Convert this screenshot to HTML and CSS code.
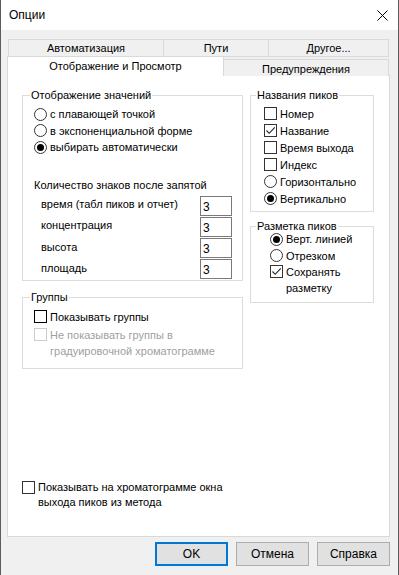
FILE: index.html
```html
<!DOCTYPE html>
<html lang="ru">
<head>
    <meta charset="UTF-8">
    <meta name="viewport" content="width=device-width, initial-scale=1.0">
    <title>Опции</title>
    <link rel="stylesheet" href="styles.css">
</head>
<body>
<div class="window">
    <div class="titlebar">
        <span class="title">Опции</span>
        <svg class="close" width="11" height="11" viewBox="0 0 11 11">
            <path d="M0.5 0.5 L10.5 10.5 M10.5 0.5 L0.5 10.5" stroke="#000" stroke-width="1" fill="none"/>
        </svg>
    </div>

    <div class="tabs">
        <div class="tab-row back">
            <div class="tab tab-auto">Автоматизация</div>
            <div class="tab tab-paths">Пути</div>
            <div class="tab tab-other">Другое...</div>
        </div>
        <div class="tab-row front">
            <div class="tab active">Отображение и Просмотр</div>
            <div class="tab tab-warn">Предупреждения</div>
        </div>

        <div class="pane">
            <div class="columns">
                <div class="col-left">
                    <fieldset class="group">
                        <legend>Отображение значений</legend>
                        <div class="group-body values">
                            <div class="opt"><span class="radio"></span>с плавающей точкой</div>
                            <div class="opt"><span class="radio"></span>в экспоненциальной форме</div>
                            <div class="opt"><span class="radio on"></span>выбирать автоматически</div>

                            <div class="digits-title">Количество знаков после запятой</div>
                            <div class="digits">
                                <div class="digit-row"><span>время (табл пиков и отчет)</span><span class="field">3</span></div>
                                <div class="digit-row"><span>концентрация</span><span class="field">3</span></div>
                                <div class="digit-row"><span>высота</span><span class="field">3</span></div>
                                <div class="digit-row"><span>площадь</span><span class="field">3</span></div>
                            </div>
                        </div>
                    </fieldset>

                    <fieldset class="group groups">
                        <legend>Группы</legend>
                        <div class="group-body">
                            <div class="opt"><span class="check dark"></span>Показывать группы</div>
                            <div class="opt wrap disabled"><span class="check"></span><span>Не показывать группы в градуировочной хроматограмме</span></div>
                        </div>
                    </fieldset>
                </div>

                <div class="col-right">
                    <fieldset class="group small">
                        <legend>Названия пиков</legend>
                        <div class="group-body names">
                            <div class="opt"><span class="check"></span>Номер</div>
                            <div class="opt"><span class="check on"><svg width="11" height="11" viewBox="0 0 11 11"><path d="M1.5 5.5 L4.2 8.3 L9.8 2.3" stroke="#222" stroke-width="1.1" fill="none"/></svg></span>Название</div>
                            <div class="opt"><span class="check"></span>Время выхода</div>
                            <div class="opt"><span class="check"></span>Индекс</div>
                            <div class="opt"><span class="radio"></span>Горизонтально</div>
                            <div class="opt"><span class="radio on"></span>Вертикально</div>
                        </div>
                    </fieldset>

                    <fieldset class="group small marks">
                        <legend>Разметка пиков</legend>
                        <div class="group-body marks-body">
                            <div class="opt"><span class="radio on"></span>Верт. линией</div>
                            <div class="opt"><span class="radio"></span>Отрезком</div>
                            <div class="opt wrap"><span class="check on"><svg width="11" height="11" viewBox="0 0 11 11"><path d="M1.5 5.5 L4.2 8.3 L9.8 2.3" stroke="#222" stroke-width="1.1" fill="none"/></svg></span><span>Сохранять разметку</span></div>
                        </div>
                    </fieldset>
                </div>
            </div>

            <div class="opt wrap bottom-opt"><span class="check"></span><span>Показывать на хроматограмме окна выхода пиков из метода</span></div>
        </div>
    </div>

    <div class="buttons">
        <button class="btn default">OK</button>
        <button class="btn">Отмена</button>
        <button class="btn">Справка</button>
    </div>
</div>
</body>
</html>
```

FILE: styles.css
```css
body {
    margin: 0;
    font-family: "Liberation Sans", Arial, sans-serif;
    font-size: 11px;
    color: #000;
}
.window {
    width: 397px;
    height: 575px;
    border-left: 1px solid #5c5c5c;
    border-right: 1px solid #5c5c5c;
    background: #f0f0f0;
}
.titlebar {
    height: 30px;
    background: #fff;
    display: flex;
    align-items: center;
    justify-content: space-between;
    padding: 0 10px 0 8px;
    font-size: 12px;
}
.close {
    display: block;
}
.tabs {
    margin: 9px 0 0 6px;
    width: 383px;
}
.tab-row {
    display: flex;
}
.tab {
    box-sizing: border-box;
    border: 1px solid #d9d9d9;
    border-right: none;
    display: flex;
    align-items: center;
    justify-content: center;
    background: #f0f0f0;
}
.back {
    margin-left: 1px;
    height: 18px;
}
.back .tab {
    height: 18px;
}
.tab-auto {
    width: 155px;
}
.tab-paths {
    width: 105px;
}
.tab-other {
    width: 121px;
    border-right: 1px solid #d9d9d9;
}
.front {
    margin-top: -1px;
    height: 20px;
    align-items: flex-end;
}
.tab.active {
    width: 217px;
    height: 20px;
    background: #fff;
    border-right: 1px solid #d9d9d9;
    border-bottom: none;
    position: relative;
    z-index: 1;
    padding-bottom: 1px;
}
.tab-warn {
    width: 165px;
    height: 17px;
    border-left: none;
    border-bottom: none;
    border-right: 1px solid #d9d9d9;
    padding-top: 1px;
}
.pane {
    box-sizing: border-box;
    margin-top: -1px;
    height: 462px;
    background: #fff;
    border: 1px solid #d9d9d9;
    padding: 12px 0 0 14px;
}
.columns {
    display: flex;
    gap: 7px;
    align-items: flex-start;
}
.col-left {
    width: 221px;
}
.col-right {
    width: 124px;
}
.group {
    margin: 0;
    padding: 0;
    border: 1px solid #dcdcdc;
    min-width: 0;
}
.group legend {
    padding: 0 1px;
    margin-left: 7px;
    line-height: 14px;
}
.group.small legend {
    margin-left: 5px;
}
.group-body {
    padding: 4px 0 0 11px;
}
.opt {
    display: flex;
    align-items: center;
    height: 16.5px;
    white-space: nowrap;
}
.opt.wrap {
    align-items: flex-start;
    height: auto;
    white-space: normal;
    line-height: 16px;
}
.opt.wrap .check {
    margin-top: 1px;
}
.radio,
.check {
    box-sizing: border-box;
    width: 13px;
    height: 13px;
    flex: none;
    margin-right: 3px;
    border: 1px solid #333;
    background: #fff;
    display: flex;
    align-items: center;
    justify-content: center;
}
.radio {
    border-radius: 50%;
}
.radio.on::after {
    content: "";
    width: 7px;
    height: 7px;
    border-radius: 50%;
    background: #000;
}
.check.dark {
    border-color: #000;
}
.disabled {
    color: #a0a0a0;
}
.disabled .check {
    border-color: #cccccc;
}
.values {
    padding-bottom: 1px;
}
.digits-title {
    margin-top: 21px;
    height: 16px;
    line-height: 16px;
}
.digits {
    margin-top: 3px;
    padding-left: 7px;
    display: flex;
    flex-direction: column;
    gap: 1.3px;
}
.digit-row {
    display: flex;
    justify-content: space-between;
    align-items: center;
    padding-right: 10px;
}
.digit-row span:first-child {
    margin-top: -3px;
}
.field {
    box-sizing: border-box;
    width: 32px;
    height: 20px;
    border: 1px solid #7a7a7a;
    padding: 3px 0 0 2px;
    font-size: 12px;
}
.groups {
    margin-top: 9px;
}
.groups .group-body {
    padding: 4px 0 9px 11px;
}
.groups .opt.wrap {
    margin-top: 2px;
}
.names {
    padding: 3px 0 4px 13px;
}
.names .opt {
    height: 17px;
}
.marks {
    margin-top: 7px;
}
.marks-body {
    padding: 0 0 6px 19px;
    margin-top: -2px;
}
.marks-body .opt.wrap {
    padding-right: 16px;
}
.opt.bottom-opt {
    margin-top: 111px;
    width: 215px;
    line-height: 15px;
}
.bottom-opt .check {
    margin-top: 3px;
}
.buttons {
    display: flex;
    justify-content: flex-end;
    gap: 8px;
    margin: 5px 8px 0 0;
}
.btn {
    box-sizing: border-box;
    width: 73px;
    height: 24px;
    border: 1px solid #adadad;
    background: #e1e1e1;
    font-family: "Liberation Sans", Arial, sans-serif;
    font-size: 12px;
    color: #000;
    padding: 0;
}
.btn.default {
    border: 2px solid #0078d7;
}
```
